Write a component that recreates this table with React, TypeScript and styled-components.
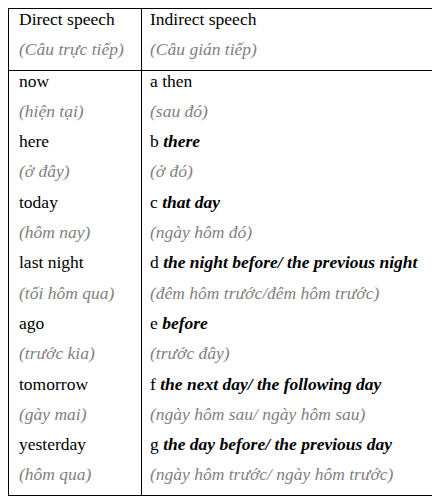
import React from 'react';
import styled, { createGlobalStyle } from 'styled-components';

// --- data ---
interface Row {
  direct: string;
  directVi: string;
  letter: string;
  indirect: string;
  indirectBold: boolean;
  indirectVi: string;
}

const ROWS: Row[] = [
  { direct: 'now', directVi: '(hiện tại)', letter: 'a', indirect: 'then', indirectBold: false, indirectVi: '(sau đó)' },
  { direct: 'here', directVi: '(ở đây)', letter: 'b', indirect: 'there', indirectBold: true, indirectVi: '(ở đó)' },
  { direct: 'today', directVi: '(hôm nay)', letter: 'c', indirect: 'that day', indirectBold: true, indirectVi: '(ngày hôm đó)' },
  {
    direct: 'last night',
    directVi: '(tối hôm qua)',
    letter: 'd',
    indirect: 'the night before/ the previous night',
    indirectBold: true,
    indirectVi: '(đêm hôm trước/đêm hôm trước)',
  },
  { direct: 'ago', directVi: '(trước kia)', letter: 'e', indirect: 'before', indirectBold: true, indirectVi: '(trước đây)' },
  {
    direct: 'tomorrow',
    directVi: '(gày mai)',
    letter: 'f',
    indirect: 'the next day/ the following day',
    indirectBold: true,
    indirectVi: '(ngày hôm sau/ ngày hôm sau)',
  },
  {
    direct: 'yesterday',
    directVi: '(hôm qua)',
    letter: 'g',
    indirect: 'the day before/ the previous day',
    indirectBold: true,
    indirectVi: '(ngày hôm trước/ ngày hôm trước)',
  },
];

// --- styles ---
const GlobalStyle = createGlobalStyle`
  body {
    margin: 8px;
    background: #ffffff;
    font-family: "Liberation Serif", "Times New Roman", serif;
  }
`;

const Table = styled.table`
  width: 428px;
  border-collapse: collapse;
  border: 1px solid #000000;
  table-layout: fixed;
`;

const Cell = styled.td<{ $left?: boolean; $head?: boolean }>`
  width: ${({ $left }) => ($left ? '122px' : 'auto')};
  padding: 0 0 0 ${({ $left }) => ($left ? '10px' : '8px')};
  vertical-align: top;
  border-right: ${({ $left }) => ($left ? '1px solid #000000' : 'none')};
  border-bottom: ${({ $head }) => ($head ? '1px solid #000000' : 'none')};
`;

const Line = styled.div<{ $muted?: boolean }>`
  padding-bottom: 10.3px;
  font-size: 17.5px;
  line-height: 20px;
  white-space: nowrap;
  color: ${({ $muted }) => ($muted ? '#7f7f7f' : '#000000')};
  font-style: ${({ $muted }) => ($muted ? 'italic' : 'normal')};
`;

const Em = styled.span`
  font-weight: bold;
  font-style: italic;
`;

const App: React.FC = () => {
  return (
    <>
      <GlobalStyle />
      <Table>
        <tbody>
          <tr>
            <Cell $left $head>
              <Line>Direct speech</Line>
              <Line $muted>(Câu trực tiếp)</Line>
            </Cell>
            <Cell $head>
              <Line>Indirect speech</Line>
              <Line $muted>(Câu gián tiếp)</Line>
            </Cell>
          </tr>
          {ROWS.map((row) => (
            <tr key={row.letter}>
              <Cell $left>
                <Line>{row.direct}</Line>
                <Line $muted>{row.directVi}</Line>
              </Cell>
              <Cell>
                <Line>
                  {row.letter}{' '}
                  {row.indirectBold ? <Em>{row.indirect}</Em> : row.indirect}
                </Line>
                <Line $muted>{row.indirectVi}</Line>
              </Cell>
            </tr>
          ))}
        </tbody>
      </Table>
    </>
  );
};

export default App;
